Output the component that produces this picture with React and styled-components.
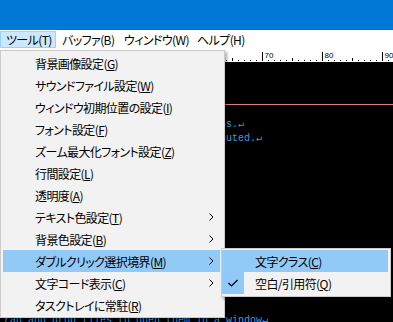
import React from 'react';
import styled, { createGlobalStyle } from 'styled-components';

const Global = createGlobalStyle`
  html, body { margin: 0; padding: 0; background: #000; }
  body { width: 393px; height: 322px; overflow: hidden; }
`;

const Window = styled.div`
  position: relative;
  width: 393px;
  height: 322px;
  overflow: hidden;
  display: flex;
  flex-direction: column;
  background: #000;
  font-family: "Noto Sans CJK JP", "Noto Sans", sans-serif;
`;

const TitleBar = styled.div`
  flex: none;
  height: 30px;
  background: #0078d7;
`;

const MenuBar = styled.div`
  flex: none;
  height: 20px;
  box-sizing: border-box;
  padding: 1px 0 2px;
  background: #fff;
  display: flex;
`;

const MenuBarItem = styled.div`
  width: ${p => p.$w}px;
  flex: none;
  box-sizing: border-box;
  padding-left: 6px;
  display: flex;
  align-items: center;
  font-size: 12px;
  letter-spacing: -0.6px;
  white-space: nowrap;
  color: #000;
  font-feature-settings: "palt";
  background: ${p => (p.$open ? '#cce8ff' : 'transparent')};
  box-shadow: ${p => (p.$open ? 'inset 0 0 0 1px #99d1ff' : 'none')};
`;

const Editor = styled.div`
  flex: 1;
  display: flex;
  flex-direction: column;
  background: #000;
`;

const RulerSvg = styled.svg`
  display: block;
  flex: none;
`;

const TextArea = styled.div`
  padding-left: 4px;
  font-family: "Liberation Mono", "DejaVu Sans Mono", monospace;
  font-size: 10px;
  color: #3b9ede;
`;

const Line = styled.div`
  height: 14px;
  line-height: 14px;
  white-space: pre;
  box-shadow: ${p => (p.$cursor ? '0 1px 0 #e27b7b' : 'none')};
`;

const Dropdown = styled.div`
  position: absolute;
  left: 0;
  top: 50px;
  width: 225px;
  box-sizing: border-box;
  background: #f2f2f2;
  border: 1px solid #cccccc;
  padding: 1px 4px 1px 2px;
  box-shadow: 2px 2px 3px rgba(0, 0, 0, 0.35);
`;

const Item = styled.div`
  height: 22px;
  display: flex;
  align-items: center;
  padding-left: ${p => p.$indent}px;
  font-size: 12px;
  letter-spacing: -0.6px;
  color: #000;
  font-feature-settings: "palt";
  white-space: nowrap;
  background: ${p => (p.$active ? '#91c9f7' : 'transparent')};
  position: relative;
`;

const Arrow = styled.svg`
  margin-left: auto;
  margin-right: 6px;
  flex: none;
`;

const CheckBox = styled.div`
  position: absolute;
  left: 0;
  top: 0;
  width: 22px;
  height: 22px;
  background: #90c8f6;
  display: flex;
  align-items: center;
  justify-content: center;
`;

const Submenu = styled.div`
  position: absolute;
  left: 221px;
  top: 248px;
  width: 170px;
  box-sizing: border-box;
  background: #f2f2f2;
  border: 1px solid #cccccc;
  padding: 1px 2px 2px 0;
  box-shadow: 2px 2px 3px rgba(0, 0, 0, 0.35);
`;

const fit = (s, n) => s.padStart(n).slice(-n);

const lines = [
  fit('This editor keeps your text in plain', 36),
  fit('files and supports many encodings', 36),
  '',
  fit('Configure the look of the editor', 36),
  fit('For details, see Tools > Settings > Optio', 36) + 'ns.\u21b5',
  fit('Changes to the file are automatically distri', 36) + 'buted.\u21b5',
  fit('Each buffer is shown in its own tab', 36),
  fit('and can be moved freely between the', 36),
  fit('windows that are currently open on', 36),
  fit('the desktop of the current session', 36),
  fit('Double click selects a whole word', 36),
  fit('according to the boundary setting', 36),
  fit('chosen in the tools menu above it', 36),
  fit('Character classes or white space', 36),
  fit('and quotation marks may be used', 36),
  fit('to decide where a selection ends', 36),
  fit('The window can stay in the tray', 36),
  fit('when it is minimized by the user', 36),
  fit('Drag and drop files to open them in', 34) + ' a window\u21b5',
];

function Ruler() {
  const ticks = [];
  for (let k = 0; k < 66; k++) {
    const x = 4 + 6 * k + 0.5;
    const col = k + 27;
    if (col % 10 === 0) {
      ticks.push(<line key={k} x1={x} y1={2} x2={x} y2={11} stroke="#000" strokeWidth="1" />);
      ticks.push(
        <text key={'t' + k} x={x + 2} y={8} fontSize="8" fontFamily="Liberation Sans, sans-serif" fill="#000">
          {col}
        </text>
      );
    } else if (col % 5 === 0) {
      ticks.push(<line key={k} x1={x} y1={8} x2={x} y2={11} stroke="#000" strokeWidth="1" />);
    } else {
      ticks.push(<line key={k} x1={x} y1={10} x2={x} y2={11} stroke="#000" strokeWidth="1" />);
    }
  }
  return (
    <RulerSvg width="393" height="12" viewBox="0 0 393 12">
      <rect x="0" y="0" width="393" height="12" fill="#fff" />
      {ticks}
    </RulerSvg>
  );
}

const ChevronRight = () => (
  <Arrow width="5" height="8" viewBox="0 0 5 8">
    <polyline points="0.5,0.5 4,4 0.5,7.5" fill="none" stroke="#000" strokeWidth="1" />
  </Arrow>
);

const Check = () => (
  <svg width="10" height="8" viewBox="0 0 10 8">
    <polyline points="0.5,4 3.5,7 9.5,1" fill="none" stroke="#000" strokeWidth="1.2" />
  </svg>
);

const M = ({ label, k }) => (
  <span>
    {label}(<u>{k}</u>)
  </span>
);

const menuItems = [
  { label: '背景画像設定', k: 'G' },
  { label: 'サウンドファイル設定', k: 'W' },
  { label: 'ウィンドウ初期位置の設定', k: 'I' },
  { label: 'フォント設定', k: 'F' },
  { label: 'ズーム最大化フォント設定', k: 'Z' },
  { label: '行間設定', k: 'L' },
  { label: '透明度', k: 'A' },
  { label: 'テキスト色設定', k: 'T', sub: true },
  { label: '背景色設定', k: 'B', sub: true },
  { label: 'ダブルクリック選択境界', k: 'M', sub: true, active: true },
  { label: '文字コード表示', k: 'C', sub: true },
  { label: 'タスクトレイに常駐', k: 'R' },
];

export default function App() {
  return (
    <>
      <Global />
      <Window>
        <TitleBar />
        <MenuBar>
          <MenuBarItem $w={56} $open>ツール(T)</MenuBarItem>
          <MenuBarItem $w={62}>バッファ(B)</MenuBarItem>
          <MenuBarItem $w={73}>ウィンドウ(W)</MenuBarItem>
          <MenuBarItem $w={62}>ヘルプ(H)</MenuBarItem>
        </MenuBar>
        <Editor>
          <Ruler />
          <TextArea>
            {lines.map((l, i) => (
              <Line key={i} $cursor={i === 2}>{l}</Line>
            ))}
          </TextArea>
        </Editor>

        <Dropdown>
          {menuItems.map(it => (
            <Item key={it.label} $indent={32} $active={it.active}>
              <M label={it.label} k={it.k} />
              {it.sub && <ChevronRight />}
            </Item>
          ))}
        </Dropdown>

        <Submenu>
          <Item $indent={33} $active>
            <M label="文字クラス" k="C" />
          </Item>
          <Item $indent={33}>
            <CheckBox>
              <Check />
            </CheckBox>
            <M label="空白/引用符" k="Q" />
          </Item>
        </Submenu>
      </Window>
    </>
  );
}
